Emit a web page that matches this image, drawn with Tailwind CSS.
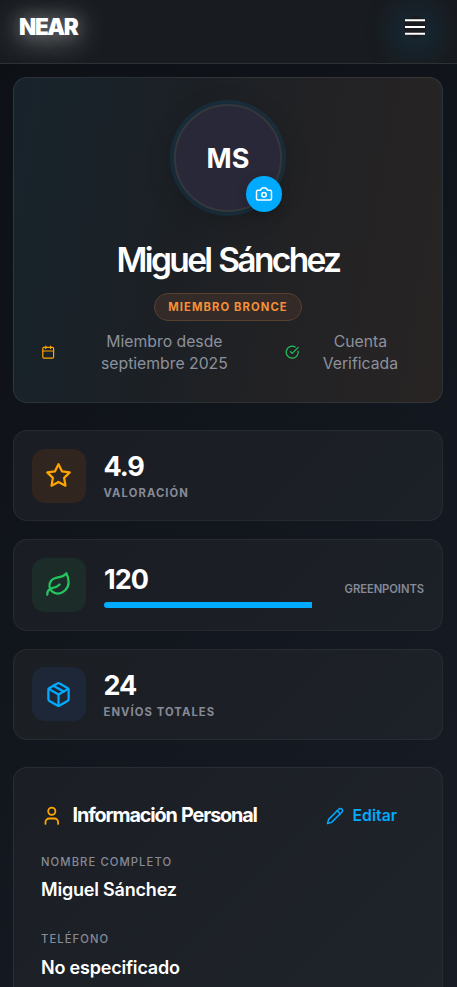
<!DOCTYPE html>
<html lang="es">
<head>
<meta charset="utf-8">
<meta name="viewport" content="width=device-width, initial-scale=1">
<title>NEAR</title>
<script src="https://cdn.jsdelivr.net/npm/@tailwindcss/browser@4"></script>
</head>
<body class="h-[987px] overflow-hidden bg-[linear-gradient(135deg,#0d1015_0%,#11151c_45%,#181c25_100%)] font-['Inter','Noto_Sans',sans-serif] text-white">
<div class="flex h-[987px] flex-col overflow-hidden">
<header class="flex h-16 shrink-0 items-center justify-between overflow-hidden border-b border-white/10 bg-[#181b1f] pr-[31px] pl-[19px]">
  <div class="relative -top-[5px] text-[22.5px] leading-[27px] font-black tracking-[-1.4px] [text-shadow:0_0_18px_rgba(255,255,255,0.3),0_4px_32px_rgba(255,255,255,0.6)]">NEAR</div>
  <button aria-label="Menú" class="relative -top-[5px] flex h-[22px] w-[22px] items-center justify-center rounded-full shadow-[0_4px_36px_8px_rgba(0,170,255,0.2)]">
    <svg class="h-[18px] w-5 shrink-0" viewBox="0 0 20 18" stroke="#fff" stroke-width="2.1"><path d="M0 2.200h20M0 9h20M0 15.700h20"/></svg>
  </button>
</header>
<main class="min-h-0 flex-1 overflow-hidden pt-[13px] pr-[14px] pl-[13px]">
  <section class="flex h-[326px] flex-col items-center rounded-[14px] border border-white/8 bg-[linear-gradient(100deg,#17232b_0%,#1c2025_40%,#222224_65%,#282424_100%)] px-[27px] pt-[26px]">
    <div class="relative flex h-27 w-27 shrink-0 items-center justify-center rounded-full border-2 border-[#34373b] bg-[#292838] shadow-[0_0_0_4px_rgba(0,170,255,0.1),0_7px_29px_rgba(0,0,0,0.2)]">
      <span class="pt-[2px] text-[27px] leading-[32px] font-bold">MS</span>
      <div class="absolute -right-[2px] -bottom-[2px] flex h-9 w-9 items-center justify-center rounded-full bg-[#00aaff] shadow-[0_4px_11px_rgba(0,0,0,0.2)]">
        <svg class="h-[18px] w-[18px]" viewBox="0 0 24 24" fill="none" stroke="#fff" stroke-width="2" stroke-linecap="round" stroke-linejoin="round"><path d="M14.5 4h-5L7 7H4a2 2 0 0 0-2 2v9a2 2 0 0 0 2 2h16a2 2 0 0 0 2-2V9a2 2 0 0 0-2-2h-3z"/><circle cx="12" cy="13" r="3"/></svg>
      </div>
    </div>
    <h1 class="mt-[28px] text-[33.5px] leading-[40px] font-semibold tracking-[-2.65px] [word-spacing:2px]">Miguel Sánchez</h1>
    <div class="mt-[13px] flex h-7 w-[148px] shrink-0 items-center justify-center rounded-full border border-[#58402f] bg-[#342b28] text-[11.25px] font-bold tracking-[1.08px] text-[#f59038]">MIEMBRO BRONCE</div>
    <div class="mt-[10px] flex w-full items-center text-center text-[15.75px] leading-[22px] text-[#8c919c]">
      <svg class="mb-[1px] h-[14.4px] w-[14.4px] shrink-0" viewBox="0 0 24 24" fill="none" stroke="#ffa500" stroke-width="2" stroke-linecap="round" stroke-linejoin="round"><path d="M8 2v4M16 2v4M3 10h18"/><rect x="3" y="4" width="18" height="18" rx="2"/></svg>
      <p class="ml-[39px] w-[140px] shrink-0">Miembro desde<br>septiembre 2025</p>
      <svg class="mb-[1px] ml-[50.6px] h-[14.4px] w-[14.4px] shrink-0" viewBox="0 0 24 24" fill="none" stroke="#22c55e" stroke-width="2" stroke-linecap="round" stroke-linejoin="round"><path d="M21.8 10A10 10 0 1 1 17 3.34"/><path d="m9 11 3 3L22 4"/></svg>
      <p class="ml-[18px] w-[86px] shrink-0">Cuenta<br>Verificada</p>
    </div>
  </section>

  <section class="mt-[27px] flex flex-col gap-[18px]">
    <div class="flex h-[91.3px] items-center rounded-[14px] border border-white/5 bg-[linear-gradient(135deg,#1a1d23,#1c2027)] px-[17.5px]">
      <div class="flex h-[54px] w-[54px] items-center justify-center rounded-[13px] bg-[#30251f]">
        <svg class="h-[27px] w-[27px]" viewBox="0 0 24 24" fill="none" stroke="#ffa500" stroke-width="2" stroke-linecap="round" stroke-linejoin="round"><path d="m12 2 3.09 6.26L22 9.27l-5 4.87 1.18 6.88L12 17.77l-6.18 3.25L7 14.14 2 9.27l6.91-1.01z"/></svg>
      </div>
      <div class="ml-[18px] pt-[2px]">
        <div class="text-[27px] leading-[32px] font-bold tracking-[-1.1px]">4.9</div>
        <div class="mt-[1px] text-[11.25px] leading-[18px] font-bold tracking-[1.08px] text-[#868a96]">VALORACIÓN</div>
      </div>
    </div>
    <div class="flex h-[91.3px] items-center rounded-[14px] border border-white/5 bg-[linear-gradient(135deg,#1a1d23,#1c2027)] px-[17.5px]">
      <div class="flex h-[54px] w-[54px] shrink-0 items-center justify-center rounded-[13px] bg-[#1c2c29]">
        <svg class="h-[27px] w-[27px]" viewBox="0 0 24 24" fill="none" stroke="#22c55e" stroke-width="2" stroke-linecap="round" stroke-linejoin="round"><path d="M11 20A7 7 0 0 1 9.8 6.1C15.5 5 17 4.48 19 2c1 2 2 4.18 2 8 0 5.5-4.78 10-10 10Z"/><path d="M2 21c0-3 1.85-5.36 5.08-6C9.5 14.52 12 13 13 12"/></svg>
      </div>
      <div class="ml-[18.5px] w-[208px] pt-[2px]">
        <div class="text-[27px] leading-[32px] font-bold tracking-[-1px]">120</div>
        <div class="mt-[6px] h-[6.5px] rounded-l-[3px] bg-[#00aaff]"></div>
      </div>
      <div class="mt-[8px] mr-[0.5px] ml-auto text-[11.25px] leading-[18px] font-semibold tracking-[-0.07px] text-[#868a96]">GREENPOINTS</div>
    </div>
    <div class="flex h-[91.3px] items-center rounded-[14px] border border-white/5 bg-[linear-gradient(135deg,#1b1f24,#1d2128)] px-[17.5px]">
      <div class="flex h-[54px] w-[54px] items-center justify-center rounded-[13px] bg-[#1d2738]">
        <svg class="h-[27px] w-[27px]" viewBox="0 0 24 24" fill="none" stroke="#00aaff" stroke-width="2" stroke-linecap="round" stroke-linejoin="round"><path d="M11 21.73a2 2 0 0 0 2 0l7-4A2 2 0 0 0 21 16V8a2 2 0 0 0-1-1.73l-7-4a2 2 0 0 0-2 0l-7 4A2 2 0 0 0 3 8v8a2 2 0 0 0 1 1.73z"/><path d="M12 22V12"/><path d="m3.3 7 8.7 5 8.7-5"/><path d="m7.5 4.27 9 5.15"/></svg>
      </div>
      <div class="ml-[18px] pt-[2px]">
        <div class="text-[27px] leading-[32px] font-bold tracking-[-1px]">24</div>
        <div class="mt-[1px] text-[11.25px] leading-[18px] font-bold tracking-[1.08px] text-[#868a96]">ENVÍOS TOTALES</div>
      </div>
    </div>
  </section>

  <section class="mt-[27px] h-[400px] rounded-[14px] border border-white/5 bg-[linear-gradient(135deg,#1b1f25,#20242b)] px-[27px] pt-[34px]">
    <div class="flex h-7 items-center">
      <svg class="h-[21.6px] w-[21.6px]" viewBox="0 0 24 24" fill="none" stroke="#ffa500" stroke-width="2" stroke-linecap="round" stroke-linejoin="round"><path d="M19 21v-2a4 4 0 0 0-4-4H9a4 4 0 0 0-4 4v2"/><circle cx="12" cy="7" r="4"/></svg>
      <h2 class="mb-[1px] ml-[10px] text-[19.8px] font-bold tracking-[-1.15px] [word-spacing:1px]">Información Personal</h2>
      <button class="mr-[18px] ml-auto flex items-center gap-[9px] text-[15.75px] font-semibold text-[#00aaff]">
        <svg class="h-[18px] w-[18px]" viewBox="0 0 24 24" fill="none" stroke="currentColor" stroke-width="2" stroke-linecap="round" stroke-linejoin="round"><path d="M17 3a2.85 2.83 0 1 1 4 4L7.500 20.500 2 22l1.500-5.500Z"/><path d="m15 5 4 4"/></svg>
        Editar
      </button>
    </div>
    <dl>
      <dt class="mt-[23px] text-[11.25px] leading-[18px] font-medium tracking-[1.08px] text-[#868a96]">NOMBRE COMPLETO</dt>
      <dd class="mt-[5px] text-[18px] leading-[27px] font-semibold tracking-[-0.2px]">Miguel Sánchez</dd>
      <dt class="mt-[27px] text-[11.25px] leading-[18px] font-medium tracking-[1.08px] text-[#868a96]">TELÉFONO</dt>
      <dd class="mt-[6px] text-[18px] leading-[27px] font-semibold tracking-[-0.2px]">No especificado</dd>
    </dl>
  </section>
</main>
</div>
</body>
</html>
